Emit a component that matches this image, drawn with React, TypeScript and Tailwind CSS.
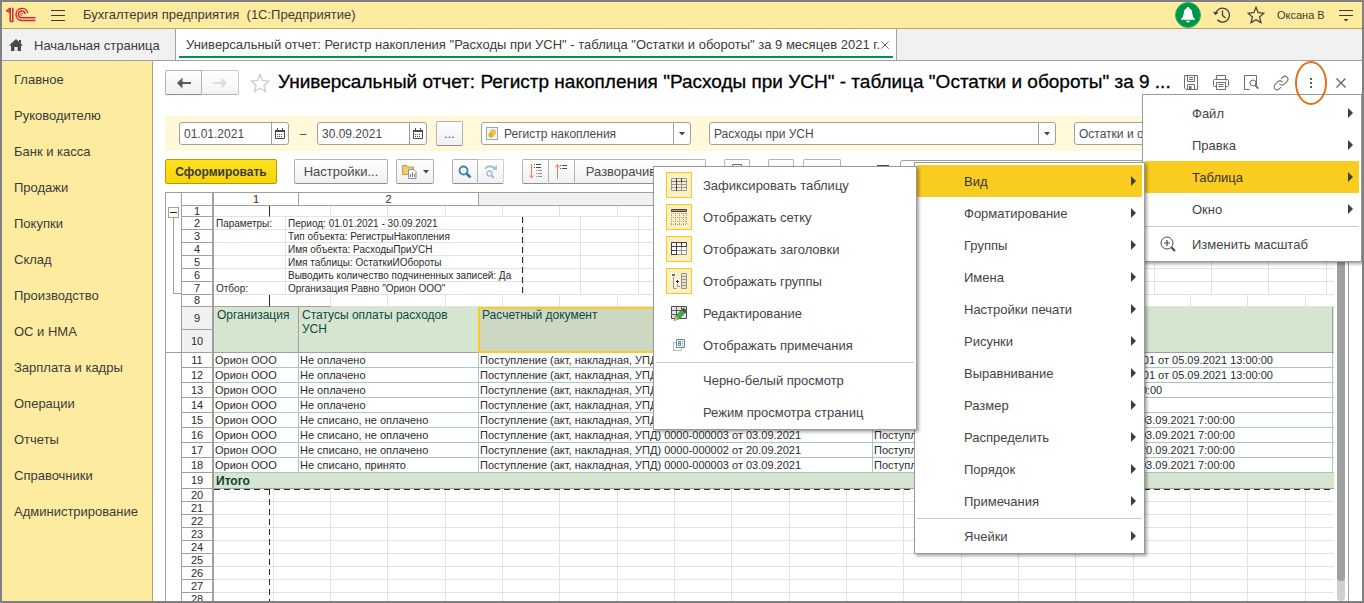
import type { ReactNode } from "react";
import clsx from "clsx";

const sections = [
  "Главное",
  "Руководителю",
  "Банк и касса",
  "Продажи",
  "Покупки",
  "Склад",
  "Производство",
  "ОС и НМА",
  "Зарплата и кадры",
  "Операции",
  "Отчеты",
  "Справочники",
  "Администрирование",
];

const params = [
  { n: 2, label: "Параметры:", text: "Период: 01.01.2021 - 30.09.2021" },
  { n: 3, label: "", text: "Тип объекта: РегистрыНакопления" },
  { n: 4, label: "", text: "Имя объекта: РасходыПриУСН" },
  { n: 5, label: "", text: "Имя таблицы: ОстаткиИОбороты" },
  { n: 6, label: "", text: "Выводить количество подчиненных записей: Да" },
  { n: 7, label: "Отбор:", text: 'Организация Равно "Орион ООО"' },
];

const doc = "Поступление (акт, накладная, УПД) ";

const rows = [
  { n: 11, status: "Не оплачено", doc: doc + "0000-000001 от 05.09.2021", reg: "Поступление (акты, накладные, УПД) № 0000-0000001 от 05.09.2021 13:00:00" },
  { n: 12, status: "Не оплачено", doc: doc + "0000-000001 от 05.09.2021", reg: "Поступление (акты, накладные, УПД) № 0000-0000001 от 05.09.2021 13:00:00" },
  { n: 13, status: "Не оплачено", doc: doc + "0000-000002 от 20.09.2021", reg: "Списание с расчетного счета 001 от 20.09.2021 12:00:00" },
  { n: 14, status: "Не оплачено", doc: doc + "0000-000003 от 03.09.2021", reg: "" },
  { n: 15, status: "Не списано, не оплачено", doc: doc + "0000-000003 от 03.09.2021", reg: doc + "0000-000003 от 03.09.2021 7:00:00" },
  { n: 16, status: "Не списано, не оплачено", doc: doc + "0000-000003 от 03.09.2021", reg: doc + "0000-000003 от 03.09.2021 7:00:00" },
  { n: 17, status: "Не списано, не оплачено", doc: doc + "0000-000002 от 20.09.2021", reg: doc + "0000-000002 от 20.09.2021 7:00:00" },
  { n: 18, status: "Не списано, принято", doc: doc + "0000-000003 от 03.09.2021", reg: doc + "0000-000003 от 03.09.2021 7:00:00" },
];

const emptyRows = [20, 21, 22, 23, 24, 25, 26, 27, 28];

type Item = { title: string; icon?: ReactNode; checked?: boolean; active?: boolean; sub?: boolean; line?: boolean };

const mainMenu: Item[] = [
  { title: "Файл", sub: true },
  { title: "Правка", sub: true },
  { title: "Таблица", sub: true, active: true },
  { title: "Окно", sub: true },
  { title: "Изменить масштаб", icon: <ZoomInIcon />, line: true },
];

const tableMenu: Item[] = [
  { title: "Вид", sub: true, active: true },
  { title: "Форматирование", sub: true },
  { title: "Группы", sub: true },
  { title: "Имена", sub: true },
  { title: "Настройки печати", sub: true },
  { title: "Рисунки", sub: true },
  { title: "Выравнивание", sub: true },
  { title: "Размер", sub: true },
  { title: "Распределить", sub: true },
  { title: "Порядок", sub: true },
  { title: "Примечания", sub: true },
  { title: "Ячейки", sub: true, line: true },
];

const viewMenu: Item[] = [
  { title: "Зафиксировать таблицу", icon: <FreezeIcon />, checked: true },
  { title: "Отображать сетку", icon: <GridIcon />, checked: true },
  { title: "Отображать заголовки", icon: <HeadersIcon />, checked: true },
  { title: "Отображать группы", icon: <GroupsIcon />, checked: true },
  { title: "Редактирование", icon: <EditIcon /> },
  { title: "Отображать примечания", icon: <NotesIcon /> },
  { title: "Черно-белый просмотр", line: true },
  { title: "Режим просмотра страниц" },
];

/* ---------- icons ---------- */

function Logo() {
  return (
    <svg width="30" height="16" viewBox="0 0 30 16" fill="none" stroke="#d9232e" strokeWidth="1.5">
      <path d="M0.3 4.6 L3.6 1.6 H4.2 V14.5" />
      <path d="M2 5.4 L4 4 M6.8 0.8 V14.5 H4.2" />
      <path d="M21.8 6 A6 6 0 1 0 15.8 13.4 H29.5" />
      <path d="M19.2 7 A3.4 3.4 0 1 0 15.8 10.8 H29.5" />
      <path d="M17 7.2 a1.2 1.2 0 1 0 -1.2 1.4" strokeWidth="1" />
    </svg>
  );
}

function HomeIcon() {
  return (
    <svg width="14" height="13" viewBox="0 0 14 13" fill="#4a4a4a">
      <path d="M7 0 L14 6.6 H12 V12 H8.6 V8 H5.4 V12 H2 V6.6 H0 Z" />
      <path d="M10 1 h2 v3 h-2z" />
    </svg>
  );
}

function StarIcon({ size, color }: { size: number; color: string }) {
  return (
    <svg width={size} height={size} viewBox="0 0 20 20" fill="none" stroke={color} strokeWidth="1.4">
      <path d="M10 1.5 L12.5 7.4 L18.8 8 L14 12.2 L15.5 18.5 L10 15.2 L4.5 18.5 L6 12.2 L1.2 8 L7.5 7.4 Z" />
    </svg>
  );
}

function HistoryIcon() {
  return (
    <svg width="18" height="18" viewBox="0 0 18 18" fill="none" stroke="#3f3f3f" strokeWidth="1.3">
      <path d="M2.6 8 A7 7 0 1 1 4.3 13.8" />
      <path d="M9.5 4.5 V9.5 L12.5 12" />
      <path d="M0 5.8 L2.4 9.2 L5.6 6.6 Z" fill="#3f3f3f" stroke="none" />
    </svg>
  );
}

function ArrowIcon({ right = false }: { right?: boolean }) {
  return (
    <svg width="14" height="12" viewBox="0 0 14 12" fill={right ? "#d0d0d0" : "#5a5a5a"} className={clsx(right && "rotate-180")}>
      <path d="M0 6 L5.5 0.5 V4.9 H14 V7.1 H5.5 V11.5 Z" />
    </svg>
  );
}

function CalendarIcon() {
  return (
    <svg width="10" height="11" viewBox="0 0 10 11" fill="none" stroke="#4a4a4a">
      <path d="M0.5 2.5 h9 v8 h-9z" />
      <path d="M0 2.5 h10 M0 3.5 h10" />
      <path d="M2.5 0 v3 M7.5 0 v3" />
      <path d="M2 6.5 h6 M2 8.5 h6" strokeDasharray="1 1" />
    </svg>
  );
}

function RegisterIcon() {
  return (
    <svg width="12" height="13" viewBox="0 0 12 13">
      <rect x="0.5" y="0.5" width="11" height="12" fill="#f2f5f8" stroke="#9aa7b3" />
      <circle cx="5" cy="8" r="2.6" fill="#e0b320" />
      <circle cx="7" cy="5.2" r="2.6" fill="#f0c93a" stroke="#c99a15" strokeWidth="0.5" />
    </svg>
  );
}

function Caret() {
  return (
    <svg width="6" height="4" viewBox="0 0 6 4" fill="#4a4a4a">
      <path d="M0 0 H6 L3 3.5 Z" />
    </svg>
  );
}

function VariantsIcon() {
  return (
    <svg width="15" height="15" viewBox="0 0 15 15">
      <path d="M0.5 1.5 h4 l1 1.5 h6 v7.5 h-11z" fill="#f3cf73" stroke="#c99a3c" />
      <path d="M6.5 5.5 h5.5 l2 2 v7 h-7.5z" fill="#fff" stroke="#8296a8" />
      <path d="M8.5 13 v-3 M12.5 13 v-3" stroke="#4b87c0" />
      <path d="M10.5 13 v-4.5" stroke="#e0572f" />
    </svg>
  );
}

function SearchIcon() {
  return (
    <svg width="14" height="14" viewBox="0 0 14 14" fill="none" stroke="#3a80b5">
      <circle cx="5.5" cy="5.5" r="4" strokeWidth="1.8" />
      <path d="M8.5 8.5 L12.5 12.5" strokeWidth="2.6" />
    </svg>
  );
}

function SearchNextIcon() {
  return (
    <svg width="14" height="14" viewBox="0 0 14 14" fill="none" stroke="#9dc0da">
      <path d="M1 4 Q5 -1 11 3" strokeWidth="1.8" />
      <path d="M13 0 V5 H8 Z" fill="#9dc0da" stroke="none" />
      <circle cx="5.5" cy="8.5" r="2.5" strokeWidth="1.4" />
      <path d="M7.5 10.5 L10 13" strokeWidth="1.8" />
    </svg>
  );
}

function ExpandIcon() {
  return (
    <svg width="13" height="15" viewBox="0 0 13 15" fill="none" stroke="#4a4a4a">
      <path d="M2.5 0 V13" stroke="#ef7d4d" />
      <path d="M0.5 11.5 L2.5 14 L4.5 11.5" stroke="#ef7d4d" />
      <path d="M5 0.5 h1 M7 0.5 h5 M5 3.5 h1 M7 3.5 h5" />
      <path d="M7 6.5 h1 M9 6.5 h4 M7 9.5 h1 M9 9.5 h4 M7 12.5 h1 M9 12.5 h4" stroke="#8a8a8a" />
    </svg>
  );
}

function CollapseIcon() {
  return (
    <svg width="13" height="15" viewBox="0 0 13 15" fill="none" stroke="#4a4a4a">
      <path d="M2.5 1 V15" stroke="#ef7d4d" />
      <path d="M0.5 3.5 L2.5 0.5 L4.5 3.5" stroke="#ef7d4d" />
      <path d="M5 1.5 h1 M7 1.5 h5 M5 4.5 h1 M7 4.5 h5" />
    </svg>
  );
}

function SaveIcon() {
  return (
    <svg width="16" height="15" viewBox="0 0 16 15" fill="none" stroke="#6e6e6e">
      <path d="M1.5 0.5 h13 v14 h-11.5 l-1.5 -1.5z" />
      <path d="M4.5 0.5 v6 h7 v-6 M6 2.5 h4 M6 4.5 h4 M4.5 14 v-4.5 h7 v4.5" />
      <path d="M6 11 h2.5 v3 h-2.5z" fill="#6e6e6e" stroke="none" />
    </svg>
  );
}

function PrintIcon() {
  return (
    <svg width="16" height="15" viewBox="0 0 16 15" fill="none" stroke="#6e6e6e">
      <path d="M3.5 4.5 v-4 h9 v4" />
      <path d="M3.5 11.5 h-2 q-1 0 -1 -1 v-5 q0 -1 1 -1 h13 q1 0 1 1 v5 q0 1 -1 1 h-2" />
      <path d="M3.5 7.5 h9 v7 h-9z M5.5 9.5 h5 M5.5 11.5 h5 M12.5 6 h1" />
    </svg>
  );
}

function PreviewIcon() {
  return (
    <svg width="15" height="15" viewBox="0 0 15 15" fill="none" stroke="#6e6e6e">
      <path d="M5.5 14.5 h-5 v-14 h12 v3.5" />
      <circle cx="9" cy="8" r="3" />
      <path d="M11.2 10.2 L14.3 13.6" strokeWidth="1.8" />
      <path d="M12.5 4 v6" />
    </svg>
  );
}

function LinkIcon() {
  return (
    <svg width="16" height="16" viewBox="0 0 24 24" fill="none" stroke="#6e6e6e" strokeWidth="1.6" strokeLinecap="round">
      <path d="M10 13.5 a4.5 4.5 0 0 0 6.6 0.4 l4.4 -4.4 a4.4 4.4 0 0 0 -6.3 -6.3 l-2.3 2.3" />
      <path d="M14 10.5 a4.5 4.5 0 0 0 -6.6 -0.4 l-4.4 4.4 a4.4 4.4 0 0 0 6.3 6.3 l2.3 -2.3" />
    </svg>
  );
}

function CrossIcon({ size }: { size: number }) {
  return (
    <svg width={size} height={size} viewBox="0 0 10 10" fill="none" stroke="#5f5f5f" strokeWidth="1.2">
      <path d="M0.5 0.5 L9.5 9.5 M9.5 0.5 L0.5 9.5" />
    </svg>
  );
}

function ZoomInIcon() {
  return (
    <svg width="16" height="16" viewBox="0 0 16 16" fill="none" stroke="#4a4a4a">
      <circle cx="7" cy="7" r="6" />
      <path d="M4 7 h6 M7 4 v6" strokeWidth="1.2" />
      <path d="M11.4 11.4 L15 15" strokeWidth="2.2" />
    </svg>
  );
}

function FreezeIcon() {
  return (
    <svg width="16" height="14" viewBox="0 0 16 14" fill="none" stroke="#9f998a">
      <path d="M0.5 0.5 h15 v12 h-15z" fill="#f4efe0" />
      <path d="M0 3.5 h16 M0 6.5 h16 M0 9.5 h16 M10.5 0 v13" />
      <path d="M0 3.5 h16" stroke="#7a7468" />
      <path d="M5.5 0 v13 M10.5 0 v4" stroke="#4a4540" />
    </svg>
  );
}

function GridIcon() {
  return (
    <svg width="16" height="16" viewBox="0 0 16 16" fill="none" stroke="#a39a85">
      <path d="M0.5 0.5 h15 v2 h-15z" fill="#a9a39a" stroke="#4a4036" />
      <path d="M0 4.5 h16 M0 8.5 h16 M0 12.5 h16 M0 15.5 h16" strokeDasharray="1 1" />
      <path d="M0.5 4 v12 M4.5 4 v12 M8.5 4 v12 M12.5 4 v12 M15.5 4 v12" strokeDasharray="1 1" />
    </svg>
  );
}

function HeadersIcon() {
  return (
    <svg width="16" height="14" viewBox="0 0 16 14" fill="none" stroke="#9a958a">
      <path d="M0.5 0.5 h15 v12 h-15z" fill="#fff" />
      <path d="M5.5 8.5 h10 M10.5 4 v9" />
      <path d="M0.5 0.5 h15 v4 h-15z M5.5 0.5 v12.5 M0.5 4 v8.5 h5 M0.5 8.5 h5 M10.5 0.5 v4" stroke="#3f3f3f" />
    </svg>
  );
}

function GroupsIcon() {
  return (
    <svg width="16" height="16" viewBox="0 0 16 16" fill="none" stroke="#9a958a">
      <path d="M0 0 h5 v4 h-5z M4 6 h5 v5 h-5z" fill="#fff" stroke="none" />
      <path d="M1 2 h3" stroke="#2f2f2f" strokeWidth="1.4" />
      <path d="M2.5 4 v11.5 h3 M6.5 11 v2.5 h2.5" />
      <path d="M5 8.5 h3 M6.5 7 v3" stroke="#2f2f2f" />
      <path d="M10.5 0.5 h5 v15 h-5z M10 3.5 h6 M10 6.5 h6 M10 9.5 h6 M10 12.5 h6" fill="#e8e3d5" />
    </svg>
  );
}

function EditIcon() {
  return (
    <svg width="17" height="15" viewBox="0 0 17 15" fill="none">
      <path d="M0.5 0.5 h15 v12 h-15z" fill="#e4e4e4" stroke="#4a4a4a" />
      <path d="M0 4.5 h16 M0 8.5 h8 M5.5 0 v9 M10.5 0 v5" stroke="#5f5f5f" />
      <path d="M3 14.5 L4.5 10 L12.5 2 L16 5 L8 13 Z" fill="#3fae52" stroke="#27703a" strokeWidth="0.6" />
      <path d="M3 14.5 L4.5 10 L8 13 Z" fill="#e8a860" />
      <path d="M12.5 2 L16 5 L14 7 L10.5 4 Z" fill="#44505e" />
    </svg>
  );
}

function NotesIcon() {
  return (
    <svg width="12" height="12" viewBox="0 0 12 12" fill="none">
      <path d="M0.5 3.5 h8 v8 h-8z" fill="#fff" stroke="#a9bfd0" />
      <path d="M3.5 0.5 h8 v8 h-8z" fill="#fff" stroke="#5f86a6" />
      <path d="M5.5 2.5 h2 v4 h-2z M5.5 4.5 h2 M9.5 2 v1 M9.5 4 v1 M9.5 6 v1" stroke="#5f86a6" />
    </svg>
  );
}

/* ---------- pieces ---------- */

const btn = "flex items-center justify-center h-[25px] border border-[#b3b3b3] border-b-[#8f8f8f] bg-linear-to-b from-white to-[#f0f0f0] text-[13px] text-[#4a4a4a] shrink-0";

function DateField({ label, value }: { label: string; value: string }) {
  return (
    <div className="flex h-[23px] w-[110px] shrink-0 rounded-[3px] border border-[#a0a0a0] bg-white">
      <input aria-label={label} defaultValue={value} className="min-w-0 flex-1 pl-1 outline-none" />
      <button aria-label="Календарь" className="flex w-[17px] items-center justify-center border-l border-[#a0a0a0]">
        <CalendarIcon />
      </button>
    </div>
  );
}

function Combo({ label, value, icon, width }: { label: string; value: string; icon?: ReactNode; width: string }) {
  return (
    <div className={clsx("flex h-[23px] shrink-0 items-center rounded-[3px] border border-[#a0a0a0] bg-white pl-1", width)}>
      {icon && <span className="mr-1.5">{icon}</span>}
      <select aria-label={label} className="min-w-0 flex-1 appearance-none bg-transparent outline-none">
        <option>{value}</option>
      </select>
      <span className="flex h-full w-[17px] items-center justify-center border-l border-[#a0a0a0]">
        <Caret />
      </span>
    </div>
  );
}

function Menu({ items, className }: { items: Item[]; className: string }) {
  return (
    <ul
      role="menu"
      className={clsx(
        "absolute border border-[#9a9a9a] bg-white px-0.5 pt-0.5 pb-px text-[13px] text-[#444] shadow-[2px_2px_3px_rgba(0,0,0,0.35)]",
        className
      )}
    >
      {items.map((item) => (
        <li key={item.title} role="none">
          {item.line && <hr className="my-px border-t border-[#c8c8c8]" />}
          <button
            role="menuitem"
            className={clsx("flex h-8 w-full items-center pr-1.5", item.active && "bg-[#facc20] text-[#333]")}
          >
            <span className="flex w-[47px] shrink-0 justify-center pr-px">
              <span
                className={clsx(
                  "flex size-[26px] items-center justify-center",
                  item.checked && "border border-[#fbc91f] bg-[#fdf1c4]"
                )}
              >
                {item.icon}
              </span>
            </span>
            <span className="flex-1 pt-0.5 text-left whitespace-nowrap">{item.title}</span>
            {item.sub && (
              <svg width="5" height="10" viewBox="0 0 5 10" fill="#3f3f3f">
                <path d="M0 0 L5 5 L0 10 Z" />
              </svg>
            )}
          </button>
        </li>
      ))}
    </ul>
  );
}

function RowHead({ n }: { n: number }) {
  return (
    <th className="flex w-8 shrink-0 items-center justify-center border-r-2 border-b border-[#a0a0a0] font-normal">
      {n}
    </th>
  );
}

function Filler() {
  return (
    <>
      {Array.from({ length: 30 }, (_, i) => (
        <td
          key={i}
          className={clsx("shrink-0 border-r border-b border-[#e2e2e2]", i % 3 === 1 ? "w-[58px]" : "w-[57px]")}
        />
      ))}
    </>
  );
}

function Sheet() {
  return (
    <div className="relative min-w-0 flex-1 overflow-hidden">
      <table className="block text-[11px] leading-[13px] text-[#2b2b2b]">
        <thead className="block">
          <tr className="flex h-[13px]">
            <th className="w-8 shrink-0 border-r-2 border-b border-[#a0a0a0]" />
            <th className="w-[85px] shrink-0 border-r border-b border-[#a0a0a0] font-normal">1</th>
            <th className="w-[180px] shrink-0 border-r border-b border-[#a0a0a0] font-normal">2</th>
            <th className="w-[394px] shrink-0 border-r border-b border-[#a0a0a0] bg-[#f1f1f1] font-normal">3</th>
            <th className="flex-1 border-b border-[#a0a0a0] font-normal">4</th>
          </tr>
        </thead>
        <tbody className="block">
          <tr className="flex h-[11px]">
            <RowHead n={1} />
            <td className="w-[56px] shrink-0 border-r border-b border-r-[#2b2b2b] border-b-[#e2e2e2]" />
            <td className="w-[61px] shrink-0 border-r border-b border-[#e2e2e2]" />
            <Filler />
          </tr>
          {params.map((p) => (
            <tr key={p.n} className="flex h-[13px]">
              <RowHead n={p.n} />
              <td className="w-[72px] shrink-0 border-r border-b border-[#e2e2e2] pl-0.5 text-[10px]">{p.label}</td>
              <td className="w-[238px] shrink-0 border-r border-b border-[#e2e2e2] pl-0.5 text-[10px] whitespace-nowrap">
                {p.text}
              </td>
              <Filler />
            </tr>
          ))}
          <tr className="flex h-3">
            <RowHead n={8} />
            <td className="w-[56px] shrink-0 border-r border-b border-r-[#2b2b2b] border-b-[#a0a0a0]" />
            <td className="w-[61px] shrink-0 border-r border-b border-r-[#e2e2e2] border-b-[#a0a0a0]" />
            <Filler />
          </tr>
          <tr className="flex h-[46px] bg-[#d5e5cf] text-[12px] leading-[14px] text-[#124a3c]">
            <th className="flex w-8 shrink-0 flex-col border-r-2 border-[#a0a0a0] bg-[#f1f1f1] text-[11px] font-normal text-[#2b2b2b]">
              <span className="flex flex-1 items-center justify-center border-b border-[#a0a0a0]">9</span>
              <span className="flex flex-1 items-center justify-center border-b border-[#a0a0a0]">10</span>
            </th>
            <td className="w-[85px] shrink-0 border-r border-b border-[#a0a0a0] pt-px pl-[3px]">Организация</td>
            <td className="w-[179px] shrink-0 border-b border-[#a0a0a0] pt-px pr-4 pl-[3px]">Статусы оплаты расходов УСН</td>
            <td className="w-[395px] shrink-0 border-2 border-[#fbcb24] bg-[#ccd8c2] pl-0.5 leading-3">Расчетный документ</td>
            <td className="w-[460px] shrink-0 border-r border-b border-[#a0a0a0] pt-px pl-[3px]">Регистратор</td>
            <td className="flex-1 border-b border-[#a0a0a0]" />
          </tr>
          {rows.map((r) => (
            <tr key={r.n} className="flex h-[15px] leading-[15px]">
              <RowHead n={r.n} />
              <td className="w-[85px] shrink-0 border-r border-b border-[#a9c8bd] pl-px">Орион ООО</td>
              <td className="w-[180px] shrink-0 border-r border-b border-[#a9c8bd] pl-px">{r.status}</td>
              <td className="w-[394px] shrink-0 border-r border-b border-[#a9c8bd] pl-px whitespace-nowrap">{r.doc}</td>
              <td className="w-[460px] shrink-0 border-r border-b border-[#a9c8bd] pl-px whitespace-nowrap">{r.reg}</td>
              <td className="flex-1 border-b border-[#a9c8bd]" />
            </tr>
          ))}
          <tr className="flex h-4">
            <RowHead n={19} />
            <td className="flex-1 border-b border-[#a0a0a0] bg-[#d5e5cf] pl-0.5 text-[12px] leading-4 font-bold text-[#0b4435]">Итого</td>
          </tr>
          {emptyRows.map((n) => (
            <tr key={n} className="flex h-[13px]">
              <RowHead n={n} />
              <td className="w-[60px] shrink-0 border-r border-b border-[#e2e2e2]" />
              <td className="w-[57px] shrink-0 border-r border-b border-[#e2e2e2]" />
              <Filler />
            </tr>
          ))}
        </tbody>
      </table>
      {/* page borders lie over the cells */}
      <div className="absolute top-6 left-[340px] h-[78px] w-px bg-[repeating-linear-gradient(to_bottom,#2b2b2b_0_6px,transparent_6px_10px)]" />
      <div className="absolute top-[296px] right-0 left-8 h-px bg-[repeating-linear-gradient(to_right,#2b2b2b_0_6px,transparent_6px_10px)]" />
      <div className="absolute top-[296px] bottom-0 left-[87px] w-px bg-[repeating-linear-gradient(to_bottom,#2b2b2b_0_6px,transparent_6px_10px)]" />
    </div>
  );
}

export default function App() {
  return (
    <div className="relative flex h-screen flex-col overflow-hidden border-2 border-[#808080] bg-white font-['Liberation_Sans',Arial,sans-serif] text-[13px] text-[#3b3b3b]">
      {/* Title bar */}
      <header className="flex h-[27px] shrink-0 items-center border-b border-[#b3a667] bg-[#fdeba0] pl-1 pr-[9px]">
        <Logo />
        <button aria-label="Меню" className="ml-[15px] flex w-[14px] flex-col gap-1">
          <span className="h-px bg-[#3b3b3b]" />
          <span className="h-px bg-[#3b3b3b]" />
          <span className="h-px bg-[#3b3b3b]" />
        </button>
        <span className="ml-[18px] whitespace-pre">Бухгалтерия предприятия  (1С:Предприятие)</span>
        <div className="ml-auto flex items-center">
          <button aria-label="Оповещения" className="flex size-[26px] items-center justify-center rounded-full border border-[#22b573] bg-[#009646]">
            <svg width="16" height="16" viewBox="0 0 16 16" fill="#fff">
              <path d="M8 0 q1.2 0 1.3 1.3 Q12 2.2 12.2 6 q0.2 4 2.8 6 v0.8 H1 V12 Q3.6 10 3.8 6 Q4 2.2 6.7 1.3 Q6.8 0 8 0z" />
              <path d="M5.8 13.8 h4.4 q-0.4 1.8 -2.2 1.8 t-2.2 -1.8z" />
            </svg>
          </button>
          <button aria-label="История" className="ml-3">
            <HistoryIcon />
          </button>
          <button aria-label="Избранное" className="ml-4">
            <StarIcon size={18} color="#3f3f3f" />
          </button>
          <span className="ml-3 w-[62px] text-[11px]">Оксана В</span>
          <button aria-label="Настройки">
            <svg width="14" height="13" viewBox="0 0 14 13" fill="none" stroke="#3b3b3b">
              <path d="M0 1.5 H14 M0 6.5 H14" />
              <path d="M4.5 10 h5 l-2.5 2.5z" fill="#3b3b3b" stroke="none" />
            </svg>
          </button>
        </div>
      </header>

      {/* Open windows */}
      <nav className="flex h-8 shrink-0 border-b border-[#a0a0a0] bg-[#f1f1f1]">
        <a href="#home" className="flex w-[174px] shrink-0 items-center gap-[11px] border-r border-[#a0a0a0] pt-0.5 pl-[7px]">
          <HomeIcon />
          Начальная страница
        </a>
        <div className="flex w-[721px] shrink-0 border-r border-[#a0a0a0] bg-white px-[3px]">
          <div className="mb-0.5 flex flex-1 items-center justify-between border-b-2 border-[#009646] pt-1 pr-1 pl-[7px]">
            <a href="#report" className="whitespace-nowrap">
              Универсальный отчет: Регистр накопления "Расходы при УСН" - таблица "Остатки и обороты" за 9 месяцев 2021 г.
            </a>
            <button aria-label="Закрыть вкладку">
              <CrossIcon size={8} />
            </button>
          </div>
        </div>
      </nav>

      <div className="flex min-h-0 flex-1">
        {/* Sections */}
        <aside className="w-[151px] shrink-0 border-r border-[#b3a667] bg-[#fdeba0]">
          {sections.map((s) => (
            <a key={s} href="#section" className="flex h-9 items-center pt-0.5 pl-3">
              {s}
            </a>
          ))}
        </aside>

        <main className="flex min-w-0 flex-1 flex-col pt-[9px] pl-3">
          <div className="flex h-[25px] shrink-0 items-center pr-1.5">
            <button aria-label="Назад" className={clsx(btn, "w-[37px] rounded-l-[2px] shadow-xs")}>
              <ArrowIcon />
            </button>
            <button aria-label="Вперед" className={clsx(btn, "w-[37px] rounded-r-[2px] border-l-0 opacity-70")}>
              <ArrowIcon right />
            </button>
            <button aria-label="В избранное" className="mx-2 ml-[11px]">
              <StarIcon size={20} color="#cfcfcf" />
            </button>
            <h1 className="min-w-0 flex-1 text-[19px] whitespace-nowrap text-black [-webkit-text-stroke:0.3px_black]">
              Универсальный отчет: Регистр накопления "Расходы при УСН" - таблица "Остатки и обороты" за 9 ...
            </h1>
            <div className="flex shrink-0">
              <button aria-label="Сохранить" className="flex h-6 w-[30px] items-center justify-center"><SaveIcon /></button>
              <button aria-label="Печать" className="flex h-6 w-[30px] items-center justify-center"><PrintIcon /></button>
              <button aria-label="Просмотр" className="flex h-6 w-[30px] items-center justify-center"><PreviewIcon /></button>
              <button aria-label="Ссылка" className="flex h-6 w-[30px] items-center justify-center"><LinkIcon /></button>
              <button aria-label="Еще" className="flex h-6 w-[30px] flex-col items-center justify-center gap-0.5">
                <span className="size-0.5 bg-[#5f5f5f]" />
                <span className="size-0.5 bg-[#5f5f5f]" />
                <span className="size-0.5 bg-[#5f5f5f]" />
              </button>
              <button aria-label="Закрыть" className="flex h-6 w-[30px] items-center justify-center"><CrossIcon size={10} /></button>
            </div>
          </div>

          {/* Period and source */}
          <div className="mt-[21px] flex h-[35px] shrink-0 items-center overflow-hidden bg-[#fff9da] pl-3.5 text-[12px] text-[#4a4a4a]">
            <DateField label="Начало периода" value="01.01.2021" />
            <span className="w-7 text-center">–</span>
            <DateField label="Конец периода" value="30.09.2021" />
            <button aria-label="Выбрать период" className={clsx(btn, "ml-[9px] w-[27px] rounded-[2px]")}>...</button>
            <div className="ml-[18px] flex gap-[18px]">
              <Combo label="Тип объекта" value="Регистр накопления" icon={<RegisterIcon />} width="w-[210px]" />
              <Combo label="Объект" value="Расходы при УСН" width="w-[347px]" />
              <Combo label="Таблица" value="Остатки и обороты" width="w-[180px]" />
            </div>
          </div>

          {/* Commands */}
          <div className="mt-2 flex shrink-0 overflow-hidden">
            <button className="h-[25px] w-28 shrink-0 rounded-[2px] border border-[#b59b00] bg-linear-to-b from-[#ffe21f] to-[#f6d307] text-[12px] font-bold text-[#3b3b3b]">
              Сформировать
            </button>
            <button className={clsx(btn, "ml-[17px] w-[94px] rounded-[2px]")}>Настройки...</button>
            <button aria-label="Варианты" className={clsx(btn, "ml-2 w-[38px] gap-1.5 rounded-[2px]")}>
              <VariantsIcon />
              <Caret />
            </button>
            <button aria-label="Найти" className={clsx(btn, "ml-[18px] w-[26px] rounded-l-[2px]")}><SearchIcon /></button>
            <button aria-label="Найти далее" className={clsx(btn, "w-[26px] rounded-r-[2px] border-l-0 border-[#d0d0d0]")}><SearchNextIcon /></button>
            <button aria-label="Развернуть" className={clsx(btn, "ml-[18px] w-[27px] rounded-l-[2px]")}><ExpandIcon /></button>
            <button aria-label="Свернуть" className={clsx(btn, "w-[26px] border-l-0")}><CollapseIcon /></button>
            <button className={clsx(btn, "w-[131px] rounded-r-[2px] border-l-0")}>Разворачивать до</button>
            <button aria-label="Печать отчета" className={clsx(btn, "ml-[18px] w-[26px] rounded-[2px]")}><PrintIcon /></button>
            <button aria-label="Отправить" className={clsx(btn, "ml-[18px] w-[26px] rounded-[2px]")}><ArrowIcon /></button>
            <button aria-label="Сохранить отчет" className={clsx(btn, "ml-[9px] w-[38px] rounded-[2px]")}><Caret /></button>
            <span className="mt-1.5 ml-9 h-3 w-3 shrink-0 border border-t-2 border-[#4a4a4a]" />
            <input aria-label="Сумма" className="mt-px ml-[11px] h-[23px] min-w-0 flex-1 rounded-[3px] border border-[#a0a0a0] outline-none" />
          </div>

          {/* Spreadsheet */}
          <div className="mt-2 mr-[13px] flex min-h-0 flex-1 border border-b-0 border-[#a0a0a0]">
            <div className="flex w-4 shrink-0 flex-col border-r border-[#a0a0a0]">
              <div className="h-40 shrink-0 border-b border-[#a0a0a0] pt-[14px] pl-0.5">
                <button aria-label="Свернуть группу" className="flex size-[11px] items-center justify-center border border-[#a0a0a0] bg-[#fffef0]">
                  <span className="h-px w-[7px] bg-[#2b2b2b]" />
                </button>
                <div className="ml-[5px] h-[76px] border-b border-l border-[#a0a0a0]" />
              </div>
            </div>
            <Sheet />
            <div className="flex w-[14px] shrink-0 justify-center">
              <div className="w-2 rounded-b-full bg-[#cfcfcf]">
                <div className="h-[95%] rounded-b-full bg-[#a0a0a0]" />
              </div>
            </div>
          </div>
        </main>
      </div>

      <Menu items={mainMenu} className="top-[92px] right-0 w-[220px]" />
      <Menu items={tableMenu} className="top-[160px] right-[217px] w-[231px]" />
      <Menu items={viewMenu} className="top-[164px] right-[445px] w-[264px]" />
      {/* marker round the "more" button */}
      <div className="pointer-events-none absolute top-[59px] right-[35px] h-[44px] w-8 rounded-[50%] border-2 border-[#e2701a]" />
    </div>
  );
}
